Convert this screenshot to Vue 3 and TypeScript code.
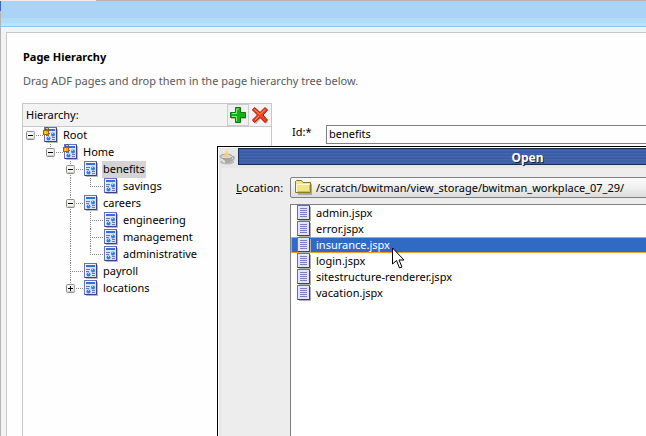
<script setup lang="ts">
import { computed, ref } from 'vue'

interface PageNode {
  name: string
  locked?: boolean
  open?: boolean
  children?: PageNode[]
}

interface TreeRow {
  node: PageNode
  depth: number
  last: boolean
  guides: boolean[]
}

const tree = ref<PageNode>({
  name: 'Root',
  locked: true,
  open: true,
  children: [
    {
      name: 'Home',
      locked: true,
      open: true,
      children: [
        { name: 'benefits', open: true, children: [{ name: 'savings' }] },
        {
          name: 'careers',
          open: true,
          children: [{ name: 'engineering' }, { name: 'management' }, { name: 'administrative' }],
        },
        { name: 'payroll' },
        { name: 'locations', open: false, children: [] },
      ],
    },
  ],
})

function flatten(node: PageNode, depth: number, last: boolean, guides: boolean[]): TreeRow[] {
  const rows: TreeRow[] = [{ node, depth, last, guides }]
  const children = node.open && node.children ? node.children : []
  children.forEach((child, i) => {
    rows.push(...flatten(child, depth + 1, i === children.length - 1, [...guides, !last]))
  })
  return rows
}

const rows = computed(() => flatten(tree.value, 0, true, []))
const selectedPage = ref('benefits')
const pageId = ref('benefits')

const folder = ref('/scratch/bwitman/view_storage/bwitman_workplace_07_29/')
const files = [
  'admin.jspx',
  'error.jspx',
  'insurance.jspx',
  'login.jspx',
  'sitestructure-renderer.jspx',
  'vacation.jspx',
]
const selectedFile = ref('insurance.jspx')

function connector(row: TreeRow): string {
  if (row.depth === 0) return 'M7 8.5H20'
  return row.last ? 'M7.5 0V9M7 8.5H20' : 'M7.5 0V17M7 8.5H20'
}
</script>

<template>
  <div class="window">
    <div class="topline"><span></span></div>
    <header class="banner"></header>
    <div class="content">
      <main class="panel">
        <h1>Page Hierarchy</h1>
        <p class="hint">Drag ADF pages and drop them in the page hierarchy tree below.</p>
        <div class="columns">
          <section class="hierarchy">
            <div class="toolbar">
              <span class="caption">Hierarchy:</span>
              <button class="tool raised" type="button" aria-label="Add page">
                <svg width="18" height="18" viewBox="0 0 18 18">
                  <path d="M7 3h5v5h5v5h-5v4H7v-4H2V8h5z" fill="#b5b5b5" />
                  <path d="M6.5 1.5h5v5h5v5h-5v5h-5v-5h-5v-5h5z" fill="#12b312" stroke="#087808" />
                  <path d="M7.5 15V10.500H3M3 7.500H7.500V3H10" fill="none" stroke="#8bf07e" />
                </svg>
              </button>
              <button class="tool" type="button" aria-label="Remove page">
                <svg width="18" height="18" viewBox="0 0 18 18">
                  <path d="M4 3l6 6 6-6M4 17l6-7 6 7" fill="none" stroke="#bbb" stroke-width="3" />
                  <path d="M3.500 1.500L9 6.500l5-5 2.500 2.500-4.500 5 4.500 5-2.500 2.500-5-5-5.500 5-2-2.500 5-5-5-5z" fill="#f5401c" stroke="#a51808" />
                  <path d="M3.500 3.500L9 8.500l5-5M4 14l4-4" fill="none" stroke="#ff9a72" />
                </svg>
              </button>
            </div>
            <ul class="tree" role="tree" aria-label="Hierarchy">
              <li v-for="row in rows" :key="row.node.name" role="treeitem" class="row" :aria-level="row.depth + 1">
                <svg v-for="(guide, i) in row.guides" :key="i" class="cell" viewBox="0 0 20 17">
                  <path v-if="guide" class="dots" d="M7.500 0V17" />
                </svg>
                <button
                  v-if="row.node.children"
                  class="toggle"
                  type="button"
                  :aria-label="(row.node.open ? 'Collapse ' : 'Expand ') + row.node.name"
                  @click="row.node.open = !row.node.open"
                >
                  <svg class="cell" viewBox="0 0 20 17">
                    <path class="dots" :d="connector(row)" />
                    <rect x="3.500" y="4.500" width="8" height="8" rx="1" fill="#f4f4f2" stroke="#8a8a8a" />
                    <path d="M4.500 11.500h6.500v-6" fill="none" stroke="#cfcfca" />
                    <path :d="row.node.open ? 'M5 8.5h5' : 'M5 8.5h5M7.5 6v5'" stroke="#000" />
                  </svg>
                </button>
                <svg v-else class="cell" viewBox="0 0 20 17">
                  <path class="dots" :d="connector(row)" />
                </svg>
                <svg class="page-icon" viewBox="0 0 16 17">
                  <path d="M3 2h12v14H3z" fill="#b8b8b8" />
                  <rect x="1.500" y=".5" width="12" height="14" fill="#d8e2fa" stroke="#6c70b8" />
                  <path d="M2.500 13V1.500H12" fill="none" stroke="#f4f7ff" />
                  <path d="M13.500 1v13.500H2" fill="none" stroke="#3c4088" />
                  <path d="M3 2h9v2H3z" fill="#3470dc" />
                  <path d="M3 6.500h4M3 8.500h3M9 10.500h3M9 12.500h3" stroke="#6874b4" />
                  <circle cx="10" cy="7.500" r="2" fill="#2f80e0" />
                  <circle cx="5.500" cy="11.500" r="2" fill="#2f80e0" />
                  <path d="M9 6h1v1H9zM5 10h1v1H5z" fill="#9ce0ff" />
                  <g v-if="row.node.locked">
                    <path d="M2.500 4V2Q2.500.5 4 .5T5.500 2v2" fill="none" stroke="#65501c" />
                    <rect x=".5" y="3.500" width="5" height="4" fill="#ffae13" stroke="#a96100" />
                    <path d="M2.500 4v3" stroke="#ffe27c" />
                  </g>
                </svg>
                <button
                  type="button"
                  class="node"
                  :class="{ selected: row.node.name === selectedPage }"
                  @click="selectedPage = row.node.name"
                >{{ row.node.name }}</button>
              </li>
            </ul>
          </section>
          <form class="details" @submit.prevent>
            <label for="page-id">Id:*</label>
            <input id="page-id" v-model="pageId" type="text" />
          </form>
        </div>
      </main>
    </div>

    <section class="dialog" role="dialog" aria-labelledby="dialog-title">
      <div class="titlebar">
        <svg class="cup" viewBox="0 0 20 18">
          <ellipse cx="9" cy="14" rx="7" ry="2.500" fill="#b8b8b8" />
          <path d="M2 8q0 6 5 7h3q4-1 4.500-7z" fill="#a9a9a9" />
          <path d="M3 9q1 4 4 5" fill="none" stroke="#e4e4e4" stroke-width="2" />
          <ellipse cx="8.300" cy="8.500" rx="6.200" ry="2.300" fill="#d9d9d9" stroke="#999" />
          <path d="M14 9q3-1 2 1.500T12 12" fill="none" stroke="#aaa" stroke-width="1.500" />
          <path d="M6 9q1-2 0-4l2 1V2l3 4-1 3z" fill="#f9cf78" />
        </svg>
        <h2 id="dialog-title">Open</h2>
      </div>
      <div class="body">
        <label for="location" class="location-label"><u>L</u>ocation:</label>
        <div class="combo">
          <svg width="18" height="15" viewBox="0 0 18 15">
            <path d="M2 3h14l1 2v10H3z" fill="#aaa" />
            <path d="M.500 12.500v-11l1-1h5l1.500 2h7.500v10z" fill="#f1e68c" stroke="#8c7b20" />
            <path d="M1.500 12V4.500h13" fill="none" stroke="#fffad0" />
            <path d="M14.500 5v6.500H3" fill="none" stroke="#cdbd55" />
          </svg>
          <select id="location" v-model="folder">
            <option>/scratch/bwitman/view_storage/bwitman_workplace_07_29/</option>
          </select>
        </div>
        <ul class="files" role="listbox" aria-label="Files">
          <li
            v-for="file in files"
            :key="file"
            role="option"
            :aria-selected="file === selectedFile"
            :class="{ chosen: file === selectedFile }"
            @click="selectedFile = file"
          >
            <svg width="16" height="16" viewBox="0 0 16 16">
              <path d="M3 2h12v14H3z" fill="#b0b0b0" />
              <rect x="1.500" y=".5" width="12" height="14" fill="#e4e4f8" stroke="#6c6cb4" />
              <path d="M13.500 1v13.500H2" fill="none" stroke="#3c3c84" />
              <path d="M4 3.500h7M4 5.500h7M4 7.500h7M4 9.500h7M4 11.500h7" stroke="#7c7cba" />
            </svg>
            <span>{{ file }}</span>
          </li>
        </ul>
      </div>
    </section>

    <svg class="pointer" viewBox="0 0 13 22">
      <path d="M.5 1v16l4-3.500 3 7.500 2.500-1-3-7h5z" fill="#fff" stroke="#000" />
    </svg>
  </div>
</template>

<style>
body {
  margin: 0;
}
</style>

<style scoped>
* {
  box-sizing: border-box;
}
.window {
  position: relative;
  display: flex;
  flex-direction: column;
  min-height: 100vh;
  overflow: hidden;
  background: #f3f3f3;
  color: #000;
  font-family: 'Noto Sans', 'Open Sans', sans-serif;
  font-size: 11px;
  line-height: 16px;
}
button,
input,
select {
  margin: 0;
  padding: 0;
  border: 0;
  border-radius: 0;
  background: none;
  color: inherit;
  font: inherit;
}
h1,
h2,
p,
ul {
  margin: 0;
  padding: 0;
  list-style: none;
}
svg {
  display: block;
  flex: none;
}
.topline {
  height: 1px;
  background: #b8b4b4;
}
.topline span {
  display: block;
  width: 96px;
  height: 1px;
  background: #ececf0;
}
.banner {
  height: 26px;
  border-bottom: 1px solid #92c4ec;
  background:
    linear-gradient(#3a68c8 10px, #b4b4b4 10px) left / 1px 100% no-repeat,
    linear-gradient(#abd3f5 17px, #b0dcf5 17px 22px, #b5e5f8 22px);
}
.content {
  display: flex;
  flex: 1;
  padding: 5px 0 0 5px;
  border-left: 1px solid #b4b4b4;
}
.panel {
  display: flex;
  flex: 1;
  flex-direction: column;
  padding: 16px 0 0 15px;
  border: solid #c8c8c8;
  border-width: 1px 0 0 1px;
  background: #fefefe;
}
h1 {
  padding-left: 1px;
  font-size: 11px;
  line-height: 16px;
}
.hint {
  padding: 8px 0 14px 1px;
  color: #5a5a5a;
}
.columns {
  display: flex;
  flex: 1;
  gap: 20px;
}
.hierarchy {
  display: flex;
  flex: 0 0 250px;
  flex-direction: column;
  border: solid #c8c8c8;
  border-width: 1px 1px 0;
}
.toolbar {
  display: flex;
  align-items: center;
  height: 23px;
  border-bottom: 1px solid #c8c8c8;
  background: #f3f3f3;
}
.caption {
  flex: 1;
  padding-left: 3px;
}
.tool {
  display: grid;
  width: 22px;
  height: 22px;
  place-items: center;
}
.raised {
  border: 1px solid #ccc;
  background: #f0f0f0;
}
.row {
  display: flex;
  height: 17px;
}
.cell {
  width: 20px;
  height: 17px;
}
.dots {
  fill: none;
  stroke: #888;
  stroke-dasharray: 1 1;
}
.page-icon {
  width: 16px;
  height: 17px;
}
.node {
  margin-left: 3px;
  padding: 0 1px 2px;
  line-height: 15px;
}
.selected {
  background: #d4d4d4;
}
.details {
  display: flex;
  flex: 1;
  align-items: flex-start;
  padding-top: 21px;
}
.details label {
  width: 34px;
  line-height: 16px;
}
.details input {
  flex: 1;
  min-width: 0;
  height: 19px;
  margin-top: 1px;
  padding: 0 0 2px 2px;
  border: 1px solid #808080;
  border-right: 0;
  background: #fefefe;
}
.dialog {
  position: absolute;
  top: 146px;
  right: -192px;
  bottom: 0;
  left: 217px;
  display: flex;
  flex-direction: column;
  border: solid #000;
  border-width: 1px 1px 0;
  background: #e6e6e6;
  box-shadow: inset 1px 1px #fff;
}
.titlebar {
  display: flex;
  padding: 1px 20px 0 0;
}
.cup {
  width: 20px;
  height: 18px;
}
h2 {
  flex: 1;
  height: 17px;
  border: 1px solid #1c2c50;
  background: repeating-linear-gradient(#3a5ca4 0 1px, #4468b0 1px 2px, #3e60a8 2px 3px);
  color: #fff;
  font-size: 12px;
  line-height: 17px;
  text-align: center;
  text-shadow: 1px 1px #222;
}
.body {
  display: grid;
  flex: 1;
  grid-template-columns: 54px 1fr;
  grid-template-rows: 21px 1fr;
  row-gap: 6px;
  margin: 2px 3px 0;
  padding: 9px 0 0 15px;
  background: #ededed;
}
.location-label {
  line-height: 21px;
}
.combo {
  display: flex;
  gap: 3px;
  align-items: center;
  padding-left: 4px;
  border: 1px solid #808080;
  border-radius: 2px;
  background: linear-gradient(#fafafa, #f0f0f0 50%, #dcdcdc);
}
.combo select {
  flex: 1;
  height: 19px;
  appearance: none;
}
.files {
  grid-column: 2;
  border: solid #808080;
  border-width: 1px 0 0 1px;
  background: #fff;
}
.files li {
  display: flex;
  gap: 4px;
  height: 16px;
  padding-left: 5px;
}
.files .chosen {
  background: #316ac5;
  box-shadow: inset 0 0 0 1px #f0a020;
  color: #fff;
}
.pointer {
  position: absolute;
  top: 247px;
  left: 392px;
  width: 13px;
  height: 22px;
}
</style>
